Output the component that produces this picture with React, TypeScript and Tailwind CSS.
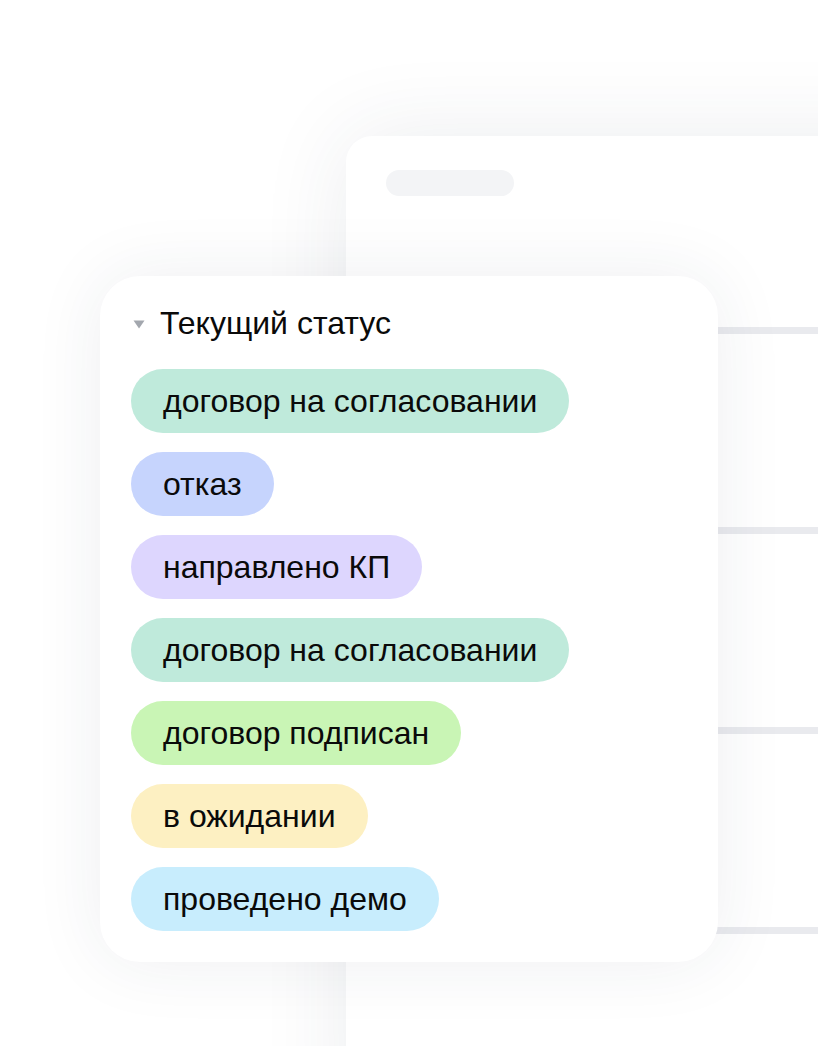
const statuses = [
  { label: "договор на согласовании", color: "bg-[#bfeadb]" },
  { label: "отказ", color: "bg-[#c6d4fd]" },
  { label: "направлено КП", color: "bg-[#ddd6fe]" },
  { label: "договор на согласовании", color: "bg-[#bfeadb]" },
  { label: "договор подписан", color: "bg-[#c9f5b5]" },
  { label: "в ожидании", color: "bg-[#fdf0c2]" },
  { label: "проведено демо", color: "bg-[#c8edfd]" },
]

export default function App() {
  return (
    <div className="relative w-[818px] h-[1046px] overflow-hidden bg-white font-['Liberation_Sans',Arial,sans-serif]">
      {/* Back card */}
      <div className="ml-[346px] mt-[136px] w-[640px] h-[1000px] bg-white rounded-tl-[26px] shadow-[0_0_90px_rgba(40,50,80,0.09)]">
        <div className="pt-[34px] pl-[40px]">
          <div className="w-[128px] h-[26px] rounded-full bg-[#f3f4f6]" />
        </div>
        <div className="mt-[131px] flex flex-col gap-[193px]">
          <div className="h-[7px] bg-[#e9eaee]" />
          <div className="h-[7px] bg-[#e9eaee]" />
          <div className="h-[7px] bg-[#e9eaee]" />
          <div className="h-[7px] bg-[#e9eaee]" />
        </div>
      </div>

      {/* Front card */}
      <div className="absolute left-[100px] top-[276px] w-[618px] h-[686px] bg-white rounded-[40px] shadow-[0_0_70px_rgba(40,50,80,0.08)] pt-[31px] pl-[31px]">
        <div className="flex items-center h-[32px]">
          <svg width="12" height="9" viewBox="0 0 12 9" className="ml-[2px] mr-[15px] mt-[2px]">
            <path d="M0.5 0.5 H11.5 L6 8.5 Z" fill="#a3a7ae" />
          </svg>
          <span className="text-[32px] leading-[32px] text-[#0a0a0a]">Текущий статус</span>
        </div>
        <div className="mt-[30px] flex flex-col items-start gap-[19px]">
          {statuses.map((s, i) => (
            <div key={i} className={`h-[64px] flex items-center px-[32px] rounded-full ${s.color}`}>
              <span className="text-[32px] leading-[32px] text-[#0a0a0a]">{s.label}</span>
            </div>
          ))}
        </div>
      </div>
    </div>
  )
}
